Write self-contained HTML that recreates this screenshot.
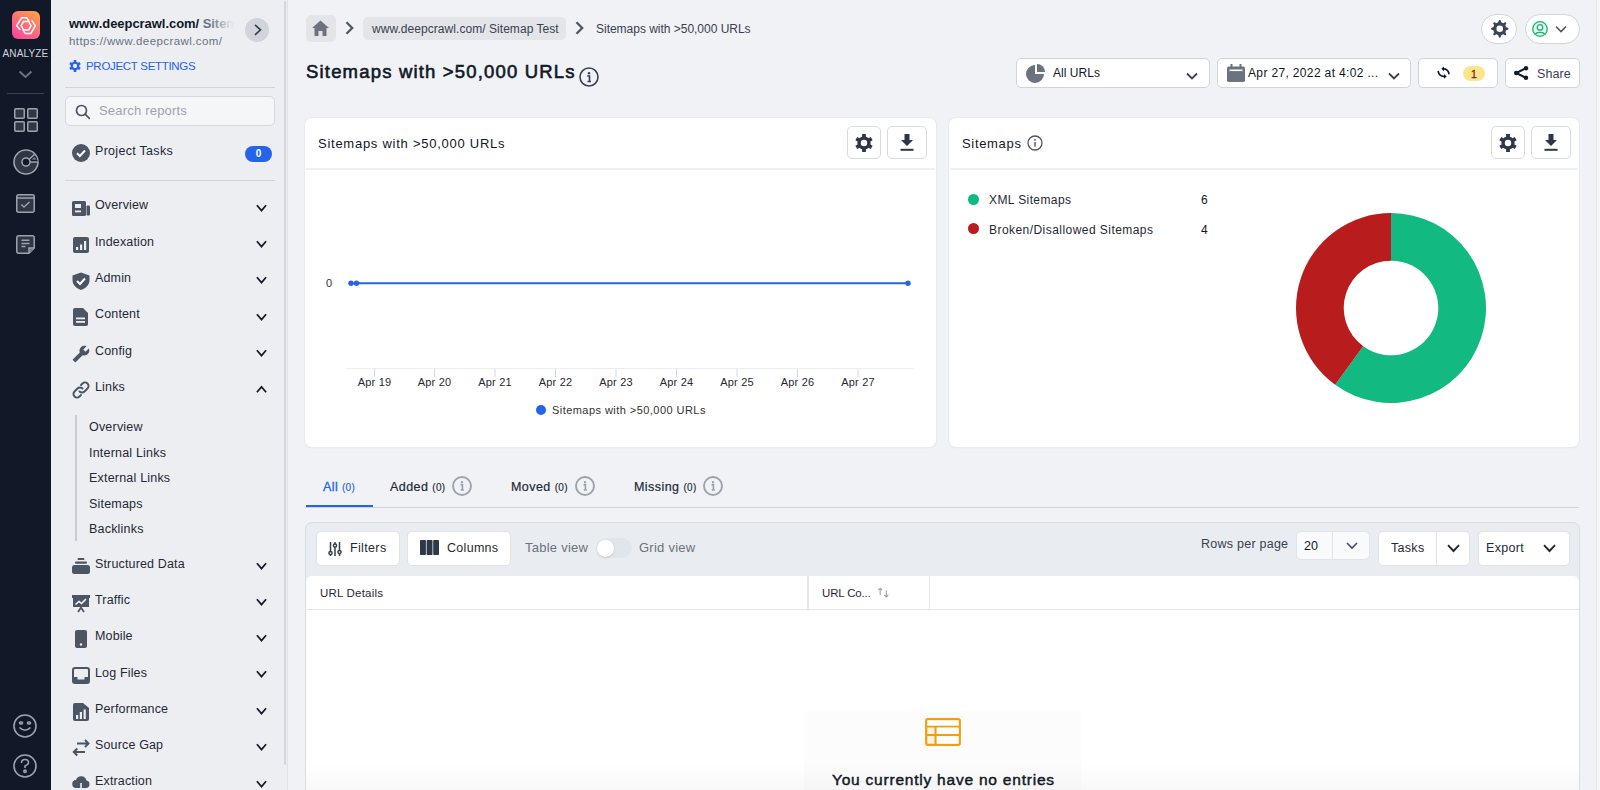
<!DOCTYPE html>
<html><head><meta charset="utf-8">
<style>
*{box-sizing:border-box;margin:0;padding:0}
html,body{width:1600px;height:790px;overflow:hidden}
body{font-family:"Liberation Sans",sans-serif;background:#f0f2f5;color:#111827;position:relative}
.a{position:absolute;white-space:nowrap}
svg{position:absolute;overflow:visible}
#rail{position:absolute;left:0;top:0;width:51px;height:790px;background:#111827}
#panel{position:absolute;left:51px;top:0;width:237px;height:790px;background:#eceef2}
.nav{position:absolute;left:95px;font-size:12.5px;color:#1f2937;letter-spacing:0.15px}
.sub{position:absolute;left:89px;font-size:12.5px;color:#1f2937;letter-spacing:0.2px}
.chev{position:absolute;left:256px}
.btn{position:absolute;background:#fff;border:1px solid #d1d5db;border-radius:5px}
.card{position:absolute;background:#fff;border-radius:7px;box-shadow:0 0 0 1px #e8eaee,0 1px 2px rgba(0,0,0,.06)}
</style></head>
<body>
<!-- RAIL -->
<div id="rail">
  <div class="a" style="left:12px;top:11px;width:28px;height:28px;border-radius:6px;background:linear-gradient(35deg,#fb3fa2 0%,#fc6f78 50%,#fdaa3c 100%)"></div>
  <svg style="left:12px;top:11px" width="28" height="28" viewBox="0 0.7 28 28" fill="none" stroke="#fff" stroke-width="1.5" stroke-linejoin="miter"><path d="M8.3 19.7 L4.7 15.4 L9.7 7.4 L14.7 7.4 L17.2 11.3"/><path d="M19.7 10.1 L23.3 15.4 L18.8 23.3 L13.3 23.3 L10.9 19.6"/><path d="M9.2 15.4 L11.6 11.1 H16.6 L19 15.4 L16.6 19.7 H11.6 Z"/></svg>
  <div class="a" style="left:0;width:51px;top:48px;text-align:center;font-size:10px;color:#d1d5db;letter-spacing:0.15px">ANALYZE</div>
  <svg style="left:18px;top:70px" width="15" height="9" viewBox="0 0 15 9"><path d="M1.5 1.5 L7.5 7 13.5 1.5" fill="none" stroke="#6b7280" stroke-width="2"/></svg>
  <div class="a" style="left:7px;top:93px;width:37px;height:1px;background:#374151"></div>
  <svg style="left:14px;top:108px" width="24" height="24" viewBox="0 0 24 24" fill="#2f3744" stroke="#9ca3af" stroke-width="1.5"><rect x="0.75" y="0.75" width="9.5" height="9.5" rx="1"/><rect x="13.75" y="0.75" width="9.5" height="9.5" rx="1"/><rect x="0.75" y="13.75" width="9.5" height="9.5" rx="1"/><rect x="13.75" y="13.75" width="9.5" height="9.5" rx="1"/></svg>
  <svg style="left:13px;top:149px" width="26" height="26" viewBox="0 0 26 26" stroke="#9ca3af" stroke-width="1.6"><circle cx="13" cy="13" r="12" fill="#2f3744"/><path d="M13 13 L21 6 A12 12 0 0 1 25 13 Z" fill="#111827" stroke="none"/><path d="M18.5 10.8 L21.5 7.8 A12 12 0 0 1 23.5 10.8 Z" fill="#6b7280" stroke="none"/><path d="M15.5 11 L21.5 5.5 M16.5 13 H25"/><circle cx="13" cy="13" r="4" fill="#111827"/></svg>
  <svg style="left:16px;top:194px" width="19" height="19" viewBox="0 0 19 19" stroke="#9ca3af" stroke-width="1.5"><rect x="0.75" y="0.75" width="17.5" height="17.5" rx="2" fill="#2f3744"/><path d="M0.75 4 H18.25" fill="none"/><path d="M5.3 10.5 L8 13 13.5 8" fill="none"/></svg>
  <svg style="left:16px;top:235px" width="19" height="19" viewBox="0 0 19 19" stroke="#9ca3af" stroke-width="1.5"><path d="M2.5 0.75 H16.25 A2 2 0 0 1 18.25 2.75 V13 L13 18.25 H2.75 A2 2 0 0 1 0.75 16.25 V2.75 A2 2 0 0 1 2.5 0.75 Z" fill="#2f3744"/><path d="M13 18.25 V13 H18.25" fill="#6b7280"/><path d="M5.5 5.2 H13.5 M5.5 8.4 H13.5 M5.5 11.6 H9.5" fill="none"/></svg>
  <svg style="left:13px;top:714px" width="24" height="24" viewBox="0 0 24 24" fill="none" stroke="#9ca3af" stroke-width="1.6"><circle cx="12" cy="12" r="11"/><path d="M6.5 13.5 Q12 19 17.5 13.5"/><rect x="6.5" y="8" width="3" height="2" rx="1"/><rect x="14.5" y="8" width="3" height="2" rx="1"/></svg>
  <svg style="left:13px;top:754px" width="24" height="24" viewBox="0 0 24 24" fill="none" stroke="#9ca3af" stroke-width="1.6"><circle cx="12" cy="12" r="11"/><path d="M8.5 9 Q8.5 5.5 12 5.5 Q15.5 5.5 15.5 8.5 Q15.5 10.5 12 12 V14"/><circle cx="12" cy="17.3" r="1.2"/></svg>
</div>

<!-- PANEL -->
<div id="panel"></div>
<div class="a" style="left:283.5px;top:1px;width:2.5px;height:764px;border-radius:2px;background:#d3d6db"></div>
<div class="a" style="left:287px;top:0;width:1px;height:790px;background:#dfe2e6"></div>

<!-- PANEL CONTENT -->
<div class="a" style="left:69px;top:16px;width:167px;overflow:hidden;font-size:13px;font-weight:700;color:#111827;letter-spacing:-0.05px">www.deepcrawl.com/ <span style="color:#6b7280">Sitemap Test</span></div>
<div class="a" style="left:210px;top:14px;width:26px;height:20px;background:linear-gradient(90deg,rgba(236,238,242,0),rgba(236,238,242,.9) 80%,#eceef2)"></div>
<div class="a" style="left:245px;top:18px;width:24px;height:24px;border-radius:12px;background:#d1d5db"></div>
<svg style="left:254px;top:24px" width="8" height="12" viewBox="0 0 8 12"><path d="M1 0.8 L6.5 5.8 1 10.8" fill="none" stroke="#374151" stroke-width="1.7"/></svg>
<div class="a" style="left:69px;top:35px;font-size:11.5px;color:#6b7280;letter-spacing:0.42px">https://www.deepcrawl.com/</div>
<svg style="left:69px;top:60px" width="12" height="12" viewBox="-9 -9 18 18"><path fill="#2563eb" fill-rule="evenodd" d="M-1.90 -6.32 L-1.90 -8.90 L1.90 -8.90 L1.90 -6.32 A6.6 6.6 0 0 1 4.52 -4.81 L6.76 -6.10 L8.66 -2.80 L6.42 -1.51 A6.6 6.6 0 0 1 6.42 1.51 L8.66 2.80 L6.76 6.10 L4.52 4.81 A6.6 6.6 0 0 1 1.90 6.32 L1.90 8.90 L-1.90 8.90 L-1.90 6.32 A6.6 6.6 0 0 1 -4.52 4.81 L-6.76 6.10 L-8.66 2.80 L-6.42 1.51 A6.6 6.6 0 0 1 -6.42 -1.51 L-8.66 -2.80 L-6.76 -6.10 L-4.52 -4.81 A6.6 6.6 0 0 1 -1.90 -6.32 Z M3.2 0 A3.2 3.2 0 1 0 -3.2 0 A3.2 3.2 0 1 0 3.2 0 Z"/></svg>
<div class="a" style="left:86px;top:60px;font-size:11.5px;color:#2563eb;letter-spacing:-0.3px">PROJECT SETTINGS</div>
<div class="a" style="left:65px;top:87px;width:210px;height:1px;background:#d1d5db"></div>
<div class="a" style="left:65px;top:96px;width:210px;height:30px;border:1px solid #d5d8dd;border-radius:5px;background:#f5f6f8"></div>
<svg style="left:75px;top:104px" width="16" height="16" viewBox="0 0 16 16" fill="none" stroke="#4b5563" stroke-width="1.7"><circle cx="6.5" cy="6.5" r="5"/><path d="M10.2 10.2 L14.8 14.8"/></svg>
<div class="a" style="left:99px;top:103px;font-size:13px;color:#9ca3af;letter-spacing:0.2px">Search reports</div>
<svg style="left:72px;top:144px" width="18" height="18" viewBox="0 0 18 18"><circle cx="9" cy="9" r="9" fill="#4b5563"/><path d="M5 9.3 L7.8 12 13 6.5" fill="none" stroke="#fff" stroke-width="2"/></svg>
<div class="nav" style="top:144px;letter-spacing:0.3px">Project Tasks</div>
<div class="a" style="left:245px;top:146px;width:27px;height:16px;border-radius:8px;background:#2563eb;color:#fff;font-size:10px;font-weight:700;text-align:center;line-height:16px">0</div>
<div class="a" style="left:65px;top:180px;width:210px;height:1px;background:#d1d5db"></div>

<!-- nav items -->
<svg style="left:72px;top:201px" width="18" height="16" viewBox="0 0 18 16"><rect x="0" y="0" width="14" height="15" rx="1.5" fill="#4b5563"/><rect x="3" y="3" width="6" height="4" fill="#eceef2"/><rect x="3" y="9.5" width="6" height="1.8" fill="#eceef2"/><rect x="14.5" y="4.5" width="3.5" height="10" rx="1" fill="#4b5563"/></svg>
<div class="nav" style="top:198px">Overview</div>
<svg class="chev" style="top:204px" width="11" height="9" viewBox="0 0 11 9"><path d="M0.9 1.3 L5.5 6.6 10.1 1.3" fill="none" stroke="#111827" stroke-width="1.7"/></svg>

<svg style="left:73px;top:237px" width="16" height="16" viewBox="0 0 16 16"><rect x="0" y="0" width="16" height="16" rx="2" fill="#4b5563"/><rect x="3" y="10" width="2.2" height="3" fill="#eceef2"/><rect x="7" y="7.5" width="2.2" height="5.5" fill="#eceef2"/><rect x="11" y="4" width="2.2" height="9" fill="#eceef2"/></svg>
<div class="nav" style="top:235px">Indexation</div>
<svg class="chev" style="top:240px" width="11" height="9" viewBox="0 0 11 9"><path d="M0.9 1.3 L5.5 6.6 10.1 1.3" fill="none" stroke="#111827" stroke-width="1.7"/></svg>

<svg style="left:72px;top:272px" width="18" height="18" viewBox="0 0 18 18"><path d="M9 0.5 L17.5 3.5 V8 C17.5 13 13.5 16.5 9 18 C4.5 16.5 0.5 13 0.5 8 V3.5 Z" fill="#4b5563"/><path d="M5 9 L8 12 13 6.5" fill="none" stroke="#fff" stroke-width="2"/></svg>
<div class="nav" style="top:271px">Admin</div>
<svg class="chev" style="top:276px" width="11" height="9" viewBox="0 0 11 9"><path d="M0.9 1.3 L5.5 6.6 10.1 1.3" fill="none" stroke="#111827" stroke-width="1.7"/></svg>

<svg style="left:73px;top:308px" width="15" height="18" viewBox="0 0 15 18"><path d="M2 0 H10 L15 5 V16 A2 2 0 0 1 13 18 H2 A2 2 0 0 1 0 16 V2 A2 2 0 0 1 2 0 Z" fill="#4b5563"/><rect x="3" y="9.5" width="9" height="1.8" fill="#eceef2"/><rect x="3" y="13" width="9" height="1.8" fill="#eceef2"/></svg>
<div class="nav" style="top:307px">Content</div>
<svg class="chev" style="top:313px" width="11" height="9" viewBox="0 0 11 9"><path d="M0.9 1.3 L5.5 6.6 10.1 1.3" fill="none" stroke="#111827" stroke-width="1.7"/></svg>

<svg style="left:72px;top:345px" width="18" height="18" viewBox="0 0 24 24"><path fill="#4b5563" d="M22.7 19l-9.1-9.1c.9-2.3.4-5-1.5-6.9-2-2-5-2.4-7.4-1.3L9 6 6 9 1.6 4.7C.4 7.1.9 10.1 2.9 12.1c1.9 1.9 4.6 2.4 6.9 1.5l9.1 9.1c.4.4 1 .4 1.4 0l2.3-2.3c.5-.4.5-1.1.1-1.4z" transform="translate(24,0) scale(-1,1)"/></svg>
<div class="nav" style="top:344px">Config</div>
<svg class="chev" style="top:349px" width="11" height="9" viewBox="0 0 11 9"><path d="M0.9 1.3 L5.5 6.6 10.1 1.3" fill="none" stroke="#111827" stroke-width="1.7"/></svg>

<svg style="left:72px;top:381px" width="18" height="18" viewBox="0 0 18 18" fill="none" stroke="#4b5563" stroke-width="1.9" stroke-linecap="round"><path d="M7.5 10.5 A3.5 3.5 0 0 0 12.5 10.5 L15.5 7.5 A3.5 3.5 0 0 0 10.5 2.5 L9 4"/><path d="M10.5 7.5 A3.5 3.5 0 0 0 5.5 7.5 L2.5 10.5 A3.5 3.5 0 0 0 7.5 15.5 L9 14"/></svg>
<div class="nav" style="top:380px">Links</div>
<svg class="chev" style="top:385px" width="11" height="9" viewBox="0 0 11 9"><path d="M0.9 7.2 L5.5 1.9 10.1 7.2" fill="none" stroke="#111827" stroke-width="1.7"/></svg>

<div class="a" style="left:75px;top:415px;width:2px;height:126px;background:#c9ccd2"></div>
<div class="sub" style="top:420px">Overview</div>
<div class="sub" style="top:446px">Internal Links</div>
<div class="sub" style="top:471px">External Links</div>
<div class="sub" style="top:497px">Sitemaps</div>
<div class="sub" style="top:522px">Backlinks</div>

<svg style="left:72px;top:558px" width="18" height="16" viewBox="0 0 18 16"><rect x="5.5" y="0" width="7" height="2" rx="1" fill="#4b5563"/><rect x="3" y="3.5" width="12" height="2.2" rx="1" fill="#4b5563"/><rect x="0" y="7" width="18" height="9" rx="2.5" fill="#4b5563"/></svg>
<div class="nav" style="top:557px">Structured Data</div>
<svg class="chev" style="top:562px" width="11" height="9" viewBox="0 0 11 9"><path d="M0.9 1.3 L5.5 6.6 10.1 1.3" fill="none" stroke="#111827" stroke-width="1.7"/></svg>

<svg style="left:72px;top:595px" width="18" height="17" viewBox="0 0 18 17"><rect x="0" y="0" width="18" height="3" fill="#4b5563"/><rect x="1" y="2" width="16" height="10" fill="#4b5563"/><path d="M3.5 9.5 L7 6.5 9.5 8.5 14 4" fill="none" stroke="#fff" stroke-width="1.6"/><path d="M6 17 L9 12.5 12 17" fill="none" stroke="#4b5563" stroke-width="1.8"/></svg>
<div class="nav" style="top:593px">Traffic</div>
<svg class="chev" style="top:598px" width="11" height="9" viewBox="0 0 11 9"><path d="M0.9 1.3 L5.5 6.6 10.1 1.3" fill="none" stroke="#111827" stroke-width="1.7"/></svg>

<svg style="left:75px;top:630px" width="12" height="18" viewBox="0 0 12 18"><rect x="0" y="0" width="12" height="18" rx="2" fill="#4b5563"/><circle cx="6" cy="14.5" r="1.2" fill="#eceef2"/></svg>
<div class="nav" style="top:629px">Mobile</div>
<svg class="chev" style="top:634px" width="11" height="9" viewBox="0 0 11 9"><path d="M0.9 1.3 L5.5 6.6 10.1 1.3" fill="none" stroke="#111827" stroke-width="1.7"/></svg>

<svg style="left:72px;top:667px" width="18" height="17" viewBox="0 0 18 17"><rect x="1" y="1" width="16" height="15" rx="2" fill="none" stroke="#4b5563" stroke-width="2"/><path d="M1 10 H5.5 V12.5 H12.5 V10 H17 V16 H1Z" fill="#4b5563"/></svg>
<div class="nav" style="top:666px">Log Files</div>
<svg class="chev" style="top:670px" width="11" height="9" viewBox="0 0 11 9"><path d="M0.9 1.3 L5.5 6.6 10.1 1.3" fill="none" stroke="#111827" stroke-width="1.7"/></svg>

<svg style="left:73px;top:703px" width="16" height="18" viewBox="0 0 16 18"><path d="M2 0 H10 L16 5 V16 A2 2 0 0 1 14 18 H2 A2 2 0 0 1 0 16 V2 A2 2 0 0 1 2 0 Z" fill="#4b5563"/><rect x="3" y="12" width="2.2" height="4" fill="#eceef2"/><rect x="6.8" y="9" width="2.2" height="7" fill="#eceef2"/><rect x="10.6" y="6.5" width="2.2" height="9.5" fill="#eceef2"/></svg>
<div class="nav" style="top:702px">Performance</div>
<svg class="chev" style="top:707px" width="11" height="9" viewBox="0 0 11 9"><path d="M0.9 1.3 L5.5 6.6 10.1 1.3" fill="none" stroke="#111827" stroke-width="1.7"/></svg>

<svg style="left:72px;top:739px" width="18" height="18" viewBox="0 0 18 18" fill="none" stroke="#4b5563" stroke-width="2"><path d="M5 4.5 H16.5 M13 1 L16.5 4.5 13 8"/><path d="M13 13 H1.8 M5.3 9.5 L1.8 13 5.3 16.5"/></svg>
<div class="nav" style="top:738px">Source Gap</div>
<svg class="chev" style="top:743px" width="11" height="9" viewBox="0 0 11 9"><path d="M0.9 1.3 L5.5 6.6 10.1 1.3" fill="none" stroke="#111827" stroke-width="1.7"/></svg>

<svg style="left:72px;top:775px" width="18" height="16" viewBox="0 0 18 16"><path d="M4.5 13 A4 4 0 0 1 4 5 A5.5 5.5 0 0 1 14.5 5.5 A3.8 3.8 0 0 1 14 13 Z" fill="#4b5563"/><path d="M9 8 V16 M6.5 13.5 L9 16 11.5 13.5" fill="none" stroke="#eceef2" stroke-width="1.6"/></svg>
<div class="nav" style="top:774px">Extraction</div>
<svg class="chev" style="top:780px" width="11" height="9" viewBox="0 0 11 9"><path d="M0.9 1.3 L5.5 6.6 10.1 1.3" fill="none" stroke="#111827" stroke-width="1.7"/></svg>

<!-- MAIN HEADER -->
<div class="a" style="left:306px;top:15px;width:30px;height:27px;border-radius:5px;background:#e3e5e9"></div>
<svg style="left:312px;top:20px" width="17" height="16" viewBox="0 0 17 16"><path d="M8.5 0.5 L17 8 H14.5 V16 H10.5 V11 H6.5 V16 H2.5 V8 H0 Z" fill="#6b7280"/></svg>
<svg style="left:345px;top:21px" width="9" height="14" viewBox="0 0 9 14"><path d="M1.5 1.2 L7.2 7 1.5 12.8" fill="none" stroke="#50575f" stroke-width="2.3"/></svg>
<div class="a" style="left:363px;top:17px;width:203px;height:23px;border-radius:5px;background:#e3e5e9"></div>
<div class="a" style="left:372px;top:22px;font-size:12px;color:#374151;letter-spacing:0.05px">www.deepcrawl.com/ Sitemap Test</div>
<svg style="left:575px;top:21px" width="9" height="14" viewBox="0 0 9 14"><path d="M1.5 1.2 L7.2 7 1.5 12.8" fill="none" stroke="#50575f" stroke-width="2.3"/></svg>
<div class="a" style="left:596px;top:22px;font-size:12px;color:#374151;letter-spacing:-0.02px">Sitemaps with &gt;50,000 URLs</div>
<div class="a" style="left:306px;top:60.7px;font-size:18.5px;font-weight:400;-webkit-text-stroke:0.6px #111827;color:#111827;letter-spacing:1.18px">Sitemaps with &gt;50,000 URLs</div>
<svg style="left:579px;top:67px" width="20" height="20" viewBox="0 0 20 20"><circle cx="10" cy="10" r="9" fill="none" stroke="#374151" stroke-width="1.6"/><circle cx="10" cy="6.3" r="1.2" fill="#374151"/><path d="M8.2 9 H10.5 V14.5 M8.5 14.5 H12" fill="none" stroke="#374151" stroke-width="1.6"/></svg>

<!-- top right -->
<div class="a" style="left:1481px;top:14px;width:36px;height:30px;border-radius:15px;background:#fff;border:1px solid #d1d5db"></div>
<svg style="left:1490.5px;top:20px" width="17.5" height="17.5" viewBox="-8.75 -8.75 17.5 17.5"><path fill="#3b4556" fill-rule="evenodd" d="M-1.48 -6.43 L-0.76 -8.67 L0.76 -8.67 L1.48 -6.43 L3.50 -5.60 L5.59 -6.66 L6.66 -5.59 L5.60 -3.50 L6.43 -1.48 L8.67 -0.76 L8.67 0.76 L6.43 1.48 L5.60 3.50 L6.66 5.59 L5.59 6.66 L3.50 5.60 L1.48 6.43 L0.76 8.67 L-0.76 8.67 L-1.48 6.43 L-3.50 5.60 L-5.59 6.66 L-6.66 5.59 L-5.60 3.50 L-6.43 1.48 L-8.67 0.76 L-8.67 -0.76 L-6.43 -1.48 L-5.60 -3.50 L-6.66 -5.59 L-5.59 -6.66 L-3.50 -5.60 Z M3.3 0 A3.3 3.3 0 1 0 -3.3 0 A3.3 3.3 0 1 0 3.3 0 Z"/></svg>
<div class="a" style="left:1525px;top:14px;width:55px;height:30px;border-radius:15px;background:#fff;border:1px solid #d1d5db"></div>
<svg style="left:1531.5px;top:20.5px" width="16" height="16" viewBox="0 0 16 16" fill="none" stroke="#16b374" stroke-width="1.3"><circle cx="8" cy="8" r="7.3" fill="#dff3e9"/><circle cx="8" cy="6.4" r="2.7" fill="#fff"/><path d="M3.4 13.3 C4.6 10.6 11.4 10.6 12.6 13.3" fill="#fff"/></svg>
<svg style="left:1555px;top:25px" width="12" height="8" viewBox="0 0 12 8"><path d="M1 1.5 L6 6.5 11 1.5" fill="none" stroke="#4b5563" stroke-width="1.6"/></svg>

<div class="btn" style="left:1016px;top:58px;width:194px;height:30px"></div>
<svg style="left:1027px;top:64px" width="18" height="18" viewBox="0 0 18 18"><path d="M8 1 V10 H17 A9 9 0 1 1 8 1 Z" fill="#6b7280"/><path d="M10 0 A8 8 0 0 1 18 8 H10 Z" fill="#6b7280"/></svg>
<div class="a" style="left:1053px;top:66px;font-size:12px;color:#111827;letter-spacing:0.05px">All URLs</div>
<svg style="left:1186px;top:72px" width="12" height="9" viewBox="0 0 12 9"><path d="M1 1.5 L6 6.5 11 1.5" fill="none" stroke="#374151" stroke-width="1.8"/></svg>

<div class="btn" style="left:1217px;top:58px;width:194px;height:30px"></div>
<svg style="left:1227px;top:64px" width="18" height="18" viewBox="0 0 18 18"><rect x="0" y="2.5" width="18" height="15.5" rx="1.8" fill="#6b7280"/><rect x="3.5" y="0" width="2" height="4" fill="#6b7280"/><rect x="12.5" y="0" width="2" height="4" fill="#6b7280"/><rect x="2.5" y="5.5" width="13" height="1.6" fill="#fff"/></svg>
<div class="a" style="left:1248px;top:66px;font-size:12px;color:#111827;letter-spacing:0.35px">Apr 27, 2022 at 4:02 ...</div>
<svg style="left:1388px;top:72px" width="12" height="9" viewBox="0 0 12 9"><path d="M1 1.5 L6 6.5 11 1.5" fill="none" stroke="#374151" stroke-width="1.8"/></svg>

<div class="btn" style="left:1418px;top:58px;width:80px;height:30px"></div>
<svg style="left:1433px;top:63px" width="22" height="20" viewBox="0 0 22 20"><path d="M15.9 10.6 A5.3 5.3 0 0 0 10.2 5.8 M5.3 8.6 A5.3 5.3 0 0 0 11 13.4" fill="none" stroke="#111827" stroke-width="1.7" stroke-linecap="round"/><path d="M8.3 5.8 L11 3.4 L11 8.2 Z M13.7 13.4 L11 11 L11 15.8 Z" fill="#111827"/></svg>
<div class="a" style="left:1463px;top:66px;width:22px;height:15px;border-radius:8px;background:#fde68a;color:#7f1d1d;font-size:10.5px;-webkit-text-stroke:0.3px #7f1d1d;text-align:center;line-height:16px">1</div>

<div class="btn" style="left:1505px;top:58px;width:75px;height:30px"></div>
<svg style="left:1514px;top:66px" width="15" height="14" viewBox="0 0 15 14"><circle cx="2.3" cy="7" r="2.3" fill="#111827"/><circle cx="12" cy="2.2" r="2.2" fill="#111827"/><circle cx="12" cy="11.8" r="2.2" fill="#111827"/><path d="M2.3 7 L12 2.2 M2.3 7 L12 11.8" stroke="#111827" stroke-width="2.1"/></svg>
<div class="a" style="left:1537px;top:67px;font-size:12.5px;color:#374151;letter-spacing:0.1px">Share</div>

<!-- CARD 1 -->
<div class="card" style="left:305px;top:118px;width:631px;height:329px"></div>
<div class="a" style="left:306px;top:168px;width:629px;height:2px;background:#eef0f3"></div>
<div class="a" style="left:318px;top:135.5px;font-size:13px;color:#111827;letter-spacing:0.74px">Sitemaps with &gt;50,000 URLs</div>
<div class="btn" style="left:847px;top:126px;width:34px;height:33px;border-color:#d7dadf"></div>
<svg style="left:855.2px;top:134px" width="18" height="18" viewBox="-9 -9 18 18"><path fill="#2d3748" fill-rule="evenodd" d="M-1.90 -6.32 L-1.90 -8.90 L1.90 -8.90 L1.90 -6.32 A6.6 6.6 0 0 1 4.52 -4.81 L6.76 -6.10 L8.66 -2.80 L6.42 -1.51 A6.6 6.6 0 0 1 6.42 1.51 L8.66 2.80 L6.76 6.10 L4.52 4.81 A6.6 6.6 0 0 1 1.90 6.32 L1.90 8.90 L-1.90 8.90 L-1.90 6.32 A6.6 6.6 0 0 1 -4.52 4.81 L-6.76 6.10 L-8.66 2.80 L-6.42 1.51 A6.6 6.6 0 0 1 -6.42 -1.51 L-8.66 -2.80 L-6.76 -6.10 L-4.52 -4.81 A6.6 6.6 0 0 1 -1.90 -6.32 Z M3.2 0 A3.2 3.2 0 1 0 -3.2 0 A3.2 3.2 0 1 0 3.2 0 Z"/></svg>
<div class="btn" style="left:887px;top:126px;width:40px;height:33px;border-color:#d7dadf"></div>
<svg style="left:900px;top:134px" width="14" height="17" viewBox="0 0 14 17"><path d="M4.5 0 H9.5 V6 H13 L7 12 1 6 H4.5 Z" fill="#2d3748"/><rect x="0.5" y="14.8" width="13" height="2" fill="#2d3748"/></svg>

<div class="a" style="left:326px;top:277px;font-size:11px;color:#333">0</div>
<div class="a" style="left:346px;top:368px;width:568px;height:1px;background:#ebedef"></div>
<svg style="left:300px;top:270px" width="640" height="150" viewBox="300 270 640 150">
  <g stroke="#ccd6eb" stroke-width="1"><path d="M374.5 369 V377 M434.5 369 V377 M495 369 V377 M555.5 369 V377 M616 369 V377 M676.5 369 V377 M737 369 V377 M797.5 369 V377 M858 369 V377"/></g>
  <path d="M351 283.3 H908" stroke="#2563eb" stroke-width="2"/>
  <circle cx="351" cy="283.3" r="2.7" fill="#2563eb"/><circle cx="356.5" cy="283.3" r="2.7" fill="#2563eb"/><circle cx="908" cy="283.3" r="2.7" fill="#2563eb"/>
</svg>
<div class="a" style="left:344px;top:376px;width:61px;text-align:center;font-size:11px;color:#1f2937;letter-spacing:0.2px">Apr 19</div>
<div class="a" style="left:404px;top:376px;width:61px;text-align:center;font-size:11px;color:#1f2937;letter-spacing:0.2px">Apr 20</div>
<div class="a" style="left:464.5px;top:376px;width:61px;text-align:center;font-size:11px;color:#1f2937;letter-spacing:0.2px">Apr 21</div>
<div class="a" style="left:525px;top:376px;width:61px;text-align:center;font-size:11px;color:#1f2937;letter-spacing:0.2px">Apr 22</div>
<div class="a" style="left:585.5px;top:376px;width:61px;text-align:center;font-size:11px;color:#1f2937;letter-spacing:0.2px">Apr 23</div>
<div class="a" style="left:646px;top:376px;width:61px;text-align:center;font-size:11px;color:#1f2937;letter-spacing:0.2px">Apr 24</div>
<div class="a" style="left:706.5px;top:376px;width:61px;text-align:center;font-size:11px;color:#1f2937;letter-spacing:0.2px">Apr 25</div>
<div class="a" style="left:767px;top:376px;width:61px;text-align:center;font-size:11px;color:#1f2937;letter-spacing:0.2px">Apr 26</div>
<div class="a" style="left:827.5px;top:376px;width:61px;text-align:center;font-size:11px;color:#1f2937;letter-spacing:0.2px">Apr 27</div>
<div class="a" style="left:536px;top:405px;width:10px;height:10px;border-radius:5px;background:#2563eb"></div>
<div class="a" style="left:552px;top:404px;font-size:11px;color:#333;letter-spacing:0.45px">Sitemaps with &gt;50,000 URLs</div>

<!-- CARD 2 -->
<div class="card" style="left:949px;top:118px;width:630px;height:329px"></div>
<div class="a" style="left:950px;top:168px;width:628px;height:2px;background:#eef0f3"></div>
<div class="a" style="left:962px;top:135.5px;font-size:13px;color:#111827;letter-spacing:0.67px">Sitemaps</div>
<svg style="left:1027px;top:135px" width="16" height="16" viewBox="0 0 16 16"><circle cx="8" cy="8" r="7" fill="none" stroke="#4b5563" stroke-width="1.3"/><circle cx="8" cy="4.8" r="0.9" fill="#4b5563"/><path d="M8 7 V11.8" stroke="#4b5563" stroke-width="1.4"/></svg>
<div class="btn" style="left:1491px;top:126px;width:34px;height:33px;border-color:#d7dadf"></div>
<svg style="left:1498.8px;top:134px" width="18" height="18" viewBox="-9 -9 18 18"><path fill="#2d3748" fill-rule="evenodd" d="M-1.90 -6.32 L-1.90 -8.90 L1.90 -8.90 L1.90 -6.32 A6.6 6.6 0 0 1 4.52 -4.81 L6.76 -6.10 L8.66 -2.80 L6.42 -1.51 A6.6 6.6 0 0 1 6.42 1.51 L8.66 2.80 L6.76 6.10 L4.52 4.81 A6.6 6.6 0 0 1 1.90 6.32 L1.90 8.90 L-1.90 8.90 L-1.90 6.32 A6.6 6.6 0 0 1 -4.52 4.81 L-6.76 6.10 L-8.66 2.80 L-6.42 1.51 A6.6 6.6 0 0 1 -6.42 -1.51 L-8.66 -2.80 L-6.76 -6.10 L-4.52 -4.81 A6.6 6.6 0 0 1 -1.90 -6.32 Z M3.2 0 A3.2 3.2 0 1 0 -3.2 0 A3.2 3.2 0 1 0 3.2 0 Z"/></svg>
<div class="btn" style="left:1531px;top:126px;width:40px;height:33px;border-color:#d7dadf"></div>
<svg style="left:1544px;top:134px" width="14" height="17" viewBox="0 0 14 17"><path d="M4.5 0 H9.5 V6 H13 L7 12 1 6 H4.5 Z" fill="#2d3748"/><rect x="0.5" y="14.8" width="13" height="2" fill="#2d3748"/></svg>

<div class="a" style="left:968px;top:194px;width:11px;height:11px;border-radius:6px;background:#10b981"></div>
<div class="a" style="left:989px;top:193px;font-size:12px;color:#1f2937;letter-spacing:0.4px">XML Sitemaps</div>
<div class="a" style="left:1201px;top:193px;font-size:12px;color:#111827">6</div>
<div class="a" style="left:968px;top:223px;width:11px;height:11px;border-radius:6px;background:#b91c1c"></div>
<div class="a" style="left:989px;top:223px;font-size:12px;color:#1f2937;letter-spacing:0.45px">Broken/Disallowed Sitemaps</div>
<div class="a" style="left:1201px;top:223px;font-size:12px;color:#111827">4</div>
<svg style="left:1291px;top:208px" width="200" height="200" viewBox="-100 -100 200 200">
  <path d="M0 -95 A95 95 0 1 1 -55.84 76.86 L-27.8 38.27 A47.3 47.3 0 1 0 0 -47.3 Z" fill="#12b981"/>
  <path d="M-55.84 76.86 A95 95 0 0 1 0 -95 L0 -47.3 A47.3 47.3 0 0 0 -27.8 38.27 Z" fill="#b91c1c"/>
</svg>

<!-- TABS -->
<div class="a" style="left:305px;top:507px;width:1274px;height:1px;background:#d1d5db"></div>
<div class="a" style="left:306px;top:505px;width:67px;height:2px;background:#2563eb"></div>
<div class="a" style="left:323px;top:480px;font-size:12.5px;font-weight:400;-webkit-text-stroke:0.3px #2563eb;color:#2563eb;letter-spacing:0.4px">All <span style="font-size:10px;-webkit-text-stroke:0.15px;letter-spacing:0.3px">(0)</span></div>
<div class="a" style="left:390px;top:480px;font-size:12.5px;font-weight:400;-webkit-text-stroke:0.2px #1f2937;color:#1f2937;letter-spacing:0.45px">Added <span style="font-size:10px;-webkit-text-stroke:0.15px;letter-spacing:0.3px">(0)</span></div>
<svg style="left:452px;top:476px" width="20" height="20" viewBox="0 0 20 20"><circle cx="10" cy="10" r="9" fill="none" stroke="#9ca3af" stroke-width="1.9"/><circle cx="10" cy="6.1" r="1.2" fill="#9ca3af"/><path d="M8.5 8.7 H10.4 V13.6 M8.8 13.9 H11.8" fill="none" stroke="#9ca3af" stroke-width="1.7"/></svg>
<div class="a" style="left:511px;top:480px;font-size:12.5px;font-weight:400;-webkit-text-stroke:0.2px #1f2937;color:#1f2937;letter-spacing:0.45px">Moved <span style="font-size:10px;-webkit-text-stroke:0.15px;letter-spacing:0.3px">(0)</span></div>
<svg style="left:575px;top:476px" width="20" height="20" viewBox="0 0 20 20"><circle cx="10" cy="10" r="9" fill="none" stroke="#9ca3af" stroke-width="1.9"/><circle cx="10" cy="6.1" r="1.2" fill="#9ca3af"/><path d="M8.5 8.7 H10.4 V13.6 M8.8 13.9 H11.8" fill="none" stroke="#9ca3af" stroke-width="1.7"/></svg>
<div class="a" style="left:634px;top:480px;font-size:12.5px;font-weight:400;-webkit-text-stroke:0.2px #1f2937;color:#1f2937;letter-spacing:0.45px">Missing <span style="font-size:10px;-webkit-text-stroke:0.15px;letter-spacing:0.3px">(0)</span></div>
<svg style="left:703px;top:476px" width="20" height="20" viewBox="0 0 20 20"><circle cx="10" cy="10" r="9" fill="none" stroke="#9ca3af" stroke-width="1.9"/><circle cx="10" cy="6.1" r="1.2" fill="#9ca3af"/><path d="M8.5 8.7 H10.4 V13.6 M8.8 13.9 H11.8" fill="none" stroke="#9ca3af" stroke-width="1.7"/></svg>

<!-- TABLE -->
<div class="a" style="left:305px;top:522px;width:1275px;height:290px;border:1px solid #d9dce1;border-radius:7px;background:#e9ecf0"></div>
<div class="a" style="left:306px;top:576px;width:1273px;height:240px;background:#fff;border-radius:6px 6px 0 0"></div>
<div class="btn" style="left:316px;top:531px;width:84px;height:35px;border-color:#dfe2e6"></div>
<svg style="left:328px;top:542px" width="14" height="14" viewBox="0 0 14 14" fill="none" stroke="#374151" stroke-width="1.5"><path d="M2.5 0 V14 M7 0 V14 M11.5 0 V14"/><circle cx="2.5" cy="11" r="1.6" fill="#fff"/><circle cx="7" cy="3.5" r="1.6" fill="#fff"/><circle cx="11.5" cy="10" r="1.6" fill="#fff"/></svg>
<div class="a" style="left:350px;top:541px;font-size:12.5px;color:#1f2937;letter-spacing:0.35px">Filters</div>
<div class="btn" style="left:407px;top:531px;width:104px;height:35px;border-color:#dfe2e6"></div>
<svg style="left:420px;top:540px" width="19" height="15" viewBox="0 0 19 15"><rect x="0" y="0" width="5.9" height="15" rx="0.8" fill="#2d3748"/><rect x="6.6" y="0" width="5.9" height="15" rx="0.8" fill="#2d3748"/><rect x="13.2" y="0" width="5.8" height="15" rx="0.8" fill="#2d3748"/></svg>
<div class="a" style="left:447px;top:541px;font-size:12.5px;color:#1f2937;letter-spacing:0.3px">Columns</div>
<div class="a" style="left:525px;top:540px;font-size:13px;color:#6b7280;letter-spacing:0.25px">Table view</div>
<div class="a" style="left:596px;top:538px;width:36px;height:20px;border-radius:10px;background:#e2e5e9"></div>
<div class="a" style="left:597px;top:540px;width:16.5px;height:16.5px;border-radius:9px;background:#fff;box-shadow:0 1px 2px rgba(0,0,0,.15)"></div>
<div class="a" style="left:639px;top:540px;font-size:13px;color:#6b7280;letter-spacing:0.25px">Grid view</div>

<div class="a" style="left:1201px;top:537px;font-size:12.5px;color:#374151;letter-spacing:0.25px">Rows per page</div>
<div class="a" style="left:1296px;top:531px;width:74px;height:29px;border:1px solid #e0e3e7;border-radius:5px;background:#f9fafb"></div>
<div class="a" style="left:1332px;top:532px;width:1px;height:27px;background:#e0e3e7"></div>
<div class="a" style="left:1304px;top:539px;font-size:12.5px;color:#111827">20</div>
<svg style="left:1346px;top:542px" width="12" height="8" viewBox="0 0 12 8"><path d="M1 1 L6 6 11 1" fill="none" stroke="#4b5563" stroke-width="1.7"/></svg>
<div class="btn" style="left:1378px;top:531px;width:92px;height:35px;border-color:#dfe2e6"></div>
<div class="a" style="left:1436px;top:532px;width:1px;height:33px;background:#e0e3e7"></div>
<div class="a" style="left:1391px;top:541px;font-size:12.5px;color:#1f2937;letter-spacing:0.3px">Tasks</div>
<svg style="left:1447px;top:544px" width="13" height="9" viewBox="0 0 13 9"><path d="M1 1.2 L6.5 7 12 1.2" fill="none" stroke="#1f2937" stroke-width="1.9"/></svg>
<div class="btn" style="left:1478px;top:531px;width:92px;height:35px;border-color:#dfe2e6"></div>
<div class="a" style="left:1486px;top:541px;font-size:12.5px;color:#1f2937;letter-spacing:0.3px">Export</div>
<svg style="left:1543px;top:544px" width="13" height="9" viewBox="0 0 13 9"><path d="M1 1.2 L6.5 7 12 1.2" fill="none" stroke="#1f2937" stroke-width="1.9"/></svg>

<div class="a" style="left:306px;top:609px;width:1273px;height:1px;background:#e5e7eb"></div>
<div class="a" style="left:807px;top:576px;width:1.5px;height:34px;background:#e5e7eb"></div>
<div class="a" style="left:928.5px;top:576px;width:1.5px;height:34px;background:#e5e7eb"></div>
<div class="a" style="left:320px;top:587px;font-size:11.5px;color:#1f2937;letter-spacing:0.2px">URL Details</div>
<div class="a" style="left:822px;top:587px;font-size:11.5px;color:#1f2937;letter-spacing:-0.15px">URL Co...</div>
<svg style="left:877px;top:587px" width="13" height="11" viewBox="0 0 13 11" fill="none" stroke="#9ca3af" stroke-width="1.1"><path d="M3.2 8 V1.2 M1.2 3.2 L3.2 1.2 5.2 3.2"/><path d="M9.3 3.5 V10 M7.3 8 L9.3 10 11.3 8"/></svg>

<div class="a" style="left:804px;top:711px;width:277px;height:90px;background:#fcfcfc"></div>
<svg style="left:925px;top:718px" width="36" height="28" viewBox="0 0 36 28"><rect x="1.2" y="1.2" width="33.6" height="25.6" rx="1.5" fill="#fbf3e6" stroke="#f59e0b" stroke-width="2.2"/><path d="M1.2 8.5 H34.8 M1.2 17 H34.8 M10.5 8.5 V26.8" stroke="#f59e0b" stroke-width="2"/><rect x="12" y="9.8" width="21.5" height="6" fill="#fff"/><rect x="12" y="18.3" width="21.5" height="7.4" fill="#fff"/><rect x="2.5" y="2.5" width="31" height="5" fill="#fff"/></svg>
<div class="a" style="left:832px;top:771px;font-size:15.5px;font-weight:400;-webkit-text-stroke:0.45px #111827;color:#111827;letter-spacing:0.78px">You currently have no entries</div>

<div class="a" style="left:306px;top:764px;width:1273px;height:26px;background:linear-gradient(180deg,rgba(0,0,0,0),rgba(0,0,0,0.028))"></div>
<div class="a" style="left:1596px;top:0;width:1px;height:790px;background:#e5e7eb"></div>
<div class="a" style="left:1597px;top:0;width:3px;height:790px;background:#f7f7f8"></div>
</body></html>
